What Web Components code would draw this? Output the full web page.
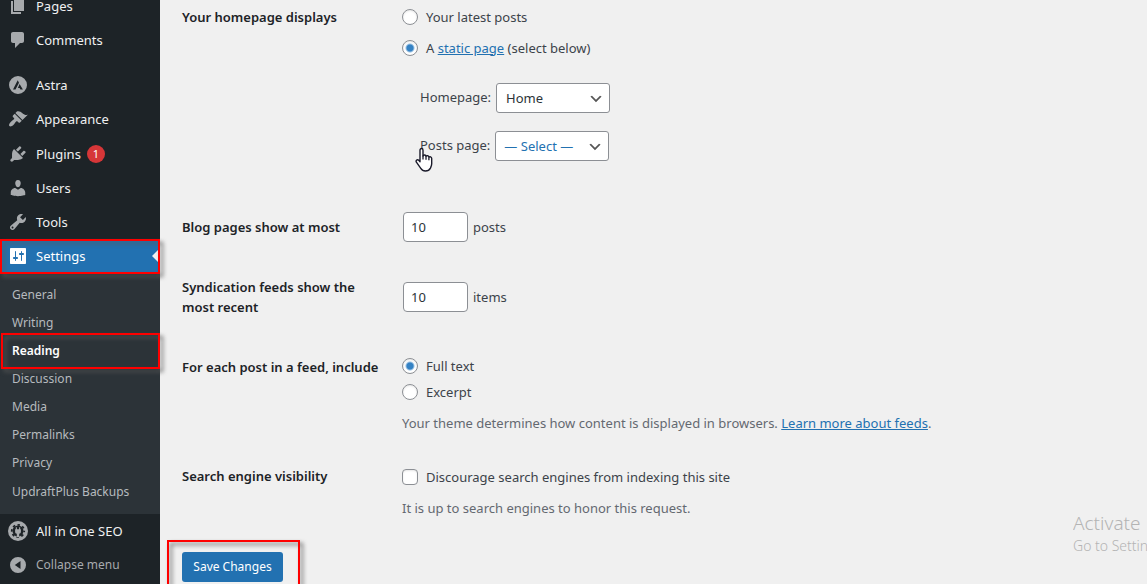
<!DOCTYPE html>
<html lang="en">
<head>
<meta charset="utf-8">
<title>Reading Settings</title>
<style>
  html, body { margin: 0; height: 100%; }
  body {
    overflow: hidden;
    background: #f0f0f0;
    color: #3c434a;
    font: 13px/20px "Noto Sans", "Open Sans", sans-serif;
  }
</style>
</head>
<body>
<admin-shell></admin-shell>

<script>
const icons = {
  page: '<path d="M6 15V2h10v13H6zM5 16h8v2H3V5h2v11z"/>',
  comments: '<path d="M5 2h9c1.100 0 2 .9 2 2v7c0 1.100-.9 2-2 2h-2l-5 5v-5H5c-1.100 0-2-.9-2-2V4c0-1.100.9-2 2-2z"/>',
  astra: '<path fill-rule="evenodd" d="M10 1a9 9 0 1 0 0 18a9 9 0 0 0 0-18zM9.700 5.200l1.300 2.600l-3.500 6.800H5zM11.600 9l3.300 5.600h-2.500l-.8-1.600H9.900z"/>',
  appearance: '<path d="M14.480 11.060L7.410 3.990l1.500-1.500c.5-.56 2.300-.47 3.510.32 1.210.8 1.430 1.280 2.910 2.100 1.180.64 2.450 1.260 4.450.85zm-.71.71L6.700 4.700 4.930 6.470c-.39.39-.39 1.020 0 1.410l1.060 1.060c.39.39.39 1.030 0 1.420-.6.6-1.430 1.110-2.210 1.690-.35.26-.7.53-1.010.84C1.430 14.230.4 16.080 1.400 17.070c.99 1 2.840-.03 4.180-1.360.31-.31.58-.66.85-1.020.57-.78 1.080-1.610 1.690-2.210.39-.39 1.020-.39 1.410 0l1.060 1.060c.39.39 1.020.39 1.410 0z"/>',
  plugins: '<path d="M13.110 4.360L9.870 7.600 8 5.730l3.240-3.240c.35-.34 1.050-.2 1.560.32.52.51.66 1.210.31 1.550zm-8 1.770l.91-1.120 9.010 9.010-1.190.84c-.71.71-2.630 1.160-3.820 1.160H6.140L4.900 17.260c-.59.59-1.540.59-2.120 0-.59-.58-.59-1.530 0-2.120l1.240-1.240v-3.880c0-1.130.4-3.190 1.090-3.890zm7.260 3.970l3.240-3.240c.34-.35 1.040-.21 1.550.31.52.51.66 1.210.31 1.550l-3.240 3.250z"/>',
  users: '<path d="M10 9.250c-2.270 0-2.730-3.440-2.730-3.440C7 4.020 7.820 2 9.970 2c2.160 0 2.980 2.020 2.710 3.810 0 0-.41 3.440-2.680 3.440zm0 2.570L12.720 10c2.390 0 4.520 2.330 4.520 4.530v2.490s-3.650 1.130-7.240 1.130c-3.650 0-7.240-1.130-7.240-1.130v-2.490c0-2.250 1.940-4.480 4.470-4.480z"/>',
  tools: '<path d="M16.680 9.770c-1.340 1.340-3.300 1.670-4.950.99l-5.410 6.520c-.99.99-2.590.99-3.580 0s-.99-2.590 0-3.570l6.520-5.420c-.68-1.650-.35-3.610.99-4.950 1.280-1.280 3.120-1.620 4.720-1.060l-2.890 2.890 2.820 2.820 2.860-2.870c.53 1.580.18 3.390-1.080 4.650zM3.810 16.210c.4.39 1.040.39 1.430 0 .4-.4.4-1.040 0-1.430-.39-.4-1.030-.4-1.430 0-.39.39-.39 1.030 0 1.430z"/>',
  settings: '<path d="M18 17V3c0-.6-.4-1-1-1H3c-.6 0-1 .4-1 1v14c0 .6.4 1 1 1h14c.6 0 1-.4 1-1zM8 11h1c.55 0 1 .45 1 1s-.45 1-1 1H8v1.500c0 .28-.22.5-.5.5s-.5-.22-.5-.5V13H6c-.55 0-1-.45-1-1s.45-1 1-1h1V5.500c0-.28.22-.5.5-.5s.5.22.5.5V11zm5-2h-1c-.55 0-1-.45-1-1s.45-1 1-1h1V5.500c0-.28.22-.5.5-.5s.5.22.5.5V7h1c.55 0 1 .45 1 1s-.45 1-1 1h-1v5.500c0 .28-.22.5-.5.5s-.5-.22-.5-.5V9z"/>',
  seo: '<circle cx="10" cy="10" r="10"/><circle cx="10" cy="10" r="5.500" fill="#1d2327"/><circle cx="10" cy="10" r="6.200" fill="none" stroke="#1d2327" stroke-width="1.800" stroke-dasharray="2.435 2.435" stroke-dashoffset="1.217"/><path d="M7.800 6.300h1.100v2h2.200v-2h1.100v2h.7v2.400c0 1.200-.7 1.800-1.700 2v3.500H8.800v-3.500c-1-.2-1.700-.8-1.700-2V8.300h.7z"/>',
  collapse: '<path fill-rule="evenodd" d="M10 2a8 8 0 1 0 0 16a8 8 0 0 0 0-16zM12.500 6v8L6.800 10z"/>'
};

function define(name, html, setup) {
  customElements.define(name, class extends HTMLElement {
    constructor() {
      super();
      const t = document.createElement('template');
      t.innerHTML = html;
      this.attachShadow({ mode: 'open' }).append(t.content.cloneNode(true));
    }
    connectedCallback() { if (setup) setup(this, this.shadowRoot); }
  });
}

define('menu-item', `
  <style>
    :host { display: block; position: relative; color: #f0f0f1; --icon: #a7aaad; }
    a {
      display: grid; grid-template-columns: 36px auto 1fr; align-items: center;
      min-height: 34px; color: inherit; text-decoration: none;
    }
    svg { width: 20px; height: 20px; justify-self: center; fill: currentColor; color: var(--icon); }
    :host([tall]) a { min-height: 35px; }
    :host([muted]) { color: #a7aaad; font-size: 12px; }
    :host([current]) { background: #2271b1; color: #fff; --icon: #fff; }
    :host([current])::after {
      content: ""; position: absolute; right: 0; top: 9px;
      border: 8px solid transparent; border-right-color: #f0f0f0; border-left: 0;
    }
    ::slotted(b) {
      justify-self: start; margin-left: 6px; width: 18px; height: 18px; border-radius: 9px;
      background: #d63638; color: #fff; font-size: 11px; font-weight: 400; line-height: 18px; text-align: center;
    }
  </style>
  <a href="#"><svg viewBox="0 0 20 20" aria-hidden="true"></svg><span><slot></slot></span><slot name="count"></slot></a>
`, (el, root) => { root.querySelector('svg').innerHTML = icons[el.getAttribute('icon')]; });

define('submenu-item', `
  <style>
    :host { display: block; position: relative; color: #b6babe; font-size: 12px; }
    a { display: block; padding: 0 12px; line-height: 28px; color: inherit; text-decoration: none; }
    :host([current]) { color: #fff; font-weight: 600; }
  </style>
  <a href="#"><slot></slot></a>
`);

define('call-out', `
  <style>
    :host {
      position: absolute; z-index: 2; box-sizing: border-box; pointer-events: none;
      border: 2px solid #f00; filter: drop-shadow(3px 3px 2px rgba(90, 90, 90, .9));
    }
  </style>
`);

define('admin-menu', `
  <style>
    :host { display: block; background: #1d2327; }
    nav { margin-top: -11px; }
    .group { margin-top: 11px; }
    .wrap { position: relative; z-index: 1; }
    .sub { background: #2c3338; padding: 8px 0; }
    .sub submenu-item:last-child { margin-top: 1px; }
    .wrap call-out { inset: 0 0 -1px; }
    .wrap.reading call-out { inset: -4px 0 -4px 1px; }
  </style>
  <nav aria-label="Main menu">
    <menu-item icon="page">Pages</menu-item>
    <menu-item icon="comments">Comments</menu-item>
    <div class="group">
      <menu-item icon="astra">Astra</menu-item>
      <menu-item icon="appearance">Appearance</menu-item>
      <menu-item icon="plugins" tall>Plugins<b slot="count">1</b></menu-item>
      <menu-item icon="users">Users</menu-item>
      <menu-item icon="tools">Tools</menu-item>
      <div class="wrap"><menu-item icon="settings" current>Settings</menu-item><call-out></call-out></div>
      <div class="sub">
        <submenu-item>General</submenu-item>
        <submenu-item>Writing</submenu-item>
        <div class="wrap reading"><submenu-item current>Reading</submenu-item><call-out></call-out></div>
        <submenu-item>Discussion</submenu-item>
        <submenu-item>Media</submenu-item>
        <submenu-item>Permalinks</submenu-item>
        <submenu-item>Privacy</submenu-item>
        <submenu-item>UpdraftPlus Backups</submenu-item>
      </div>
      <menu-item icon="seo">All in One SEO</menu-item>
      <menu-item icon="collapse" muted>Collapse menu</menu-item>
    </div>
  </nav>
`);

define('form-row', `
  <style>
    :host { display: grid; grid-template-columns: 200px 1fr; column-gap: 20px; }
    .heading { padding: 20px 0; color: #1d2327; font-weight: 600; }
    .field { align-self: center; padding: var(--field-padding, 15px 0); }
  </style>
  <div class="heading"><slot name="heading"></slot></div>
  <div class="field"><slot></slot></div>
`);

define('hand-cursor', `
  <style>
    :host { position: absolute; left: -5px; top: 16px; width: 20px; height: 26px; pointer-events: none; }
    svg { display: block; }
  </style>
  <svg width="20" height="26" viewBox="0 0 20 26" aria-hidden="true">
    <path d="M5 3.200C5 .9 8 .9 8 3.200V9c.4-1.500 2.900-1.400 3 .4c.6-1.200 2.800-.9 2.900.8c.9-1 2.800-.5 2.800 1.300v5.200c0 2-.8 3.200-1.300 4.400c-.9 1.800-2 2.900-5 2.900c-2.400 0-3.600-1-4.600-2.700L1.400 15.200c-1-1.800 1-3.200 2.300-1.900L5 14.700z" fill="#fff" stroke="#1a1a2a" stroke-width="1.400" stroke-linejoin="round"/>
    <path d="M8 8.500v4M11 9.500v3.300M13.900 10.500v2.700" fill="none" stroke="#1a1a2a" stroke-width="1.300"/>
  </svg>
`);

define('reading-settings', `
  <style>
    :host { display: block; padding: 0 20px 0 22px; }
    form { margin-top: -13px; }
    a { color: #2271b1; }
    fieldset { border: 0; margin: 0; padding: 0; min-width: 0; }
    .choice { display: flex; align-items: center; gap: 8px; min-height: 26px; }
    .front .choice { min-height: 31px; }
    .pages { display: grid; gap: 18px; margin: 20px 0 0 18px; justify-items: start; }
    .pick { position: relative; display: flex; gap: 5px; line-height: 28px; }
    input, select, button { font: inherit; margin: 0; box-sizing: border-box; }
    input, select { border: 1px solid #8c8f94; background: #fff; color: #2c3338; }
    input[type=radio], input[type=checkbox] { appearance: none; width: 16px; height: 16px; box-shadow: inset 0 1px 2px rgba(0,0,0,.1); }
    input[type=radio] { border-radius: 50%; }
    input[type=checkbox] { border-radius: 4px; }
    input[type=radio]:checked { background: radial-gradient(circle, #3582c4 0 3px, #fff 5px); }
    input[type=number] { width: 65px; height: 30px; padding: 0 7px; border-radius: 4px; margin-left: 1px; appearance: textfield; }
    .number { display: flex; align-items: center; gap: 5px; }
    select {
      appearance: none; width: 114px; height: 30px; padding: 0 24px 0 9px; border-radius: 3px; line-height: 28px;
      background: #fff url('data:image/svg+xml,%3Csvg xmlns="http://www.w3.org/2000/svg" viewBox="0 0 20 20"%3E%3Cpath d="M5 6l5 5 5-5 2 1-7 7-7-7 2-1z" fill="%23555"/%3E%3C/svg%3E') no-repeat right 5px top 55% / 16px 16px;
    }
    select.empty { color: #2271b1; padding-left: 8px; }
    p { margin: 8px 0 0; color: #646970; }
    .front { --field-padding: 14px 0 36px; }
    .include { --field-padding: 16px 0 13px; }
    .search { --field-padding: 18px 0 15px; }
    .submit { position: relative; display: inline-block; margin: 19px 0 0; }
    .submit call-out { inset: -12px -17px -12px -15px; }
    button { width: 101px; height: 30px; padding: 0; border: 0; border-radius: 3px; background: #2271b1; color: #fff; font-size: 12px; }
  </style>
  <form>
    <form-row class="front">
      <span slot="heading">Your homepage displays</span>
      <fieldset aria-label="Your homepage displays">
        <div class="choice"><input type="radio" name="front" id="latest"><label for="latest">Your latest posts</label></div>
        <div class="choice"><input type="radio" name="front" id="static" checked><label for="static">A <a href="#">static page</a> (select below)</label></div>
        <div class="pages">
          <div class="pick"><label for="home">Homepage:</label><select id="home"><option>Home</option></select></div>
          <div class="pick"><label for="posts">Posts page:</label><select id="posts" class="empty"><option>— Select —</option></select><hand-cursor></hand-cursor></div>
        </div>
      </fieldset>
    </form-row>
    <form-row class="blog">
      <label slot="heading" for="per-page">Blog pages show at most</label>
      <div class="number"><input type="number" id="per-page" value="10"><span>posts</span></div>
    </form-row>
    <form-row>
      <label slot="heading" for="per-feed">Syndication feeds show the most recent</label>
      <div class="number"><input type="number" id="per-feed" value="10"><span>items</span></div>
    </form-row>
    <form-row class="include">
      <span slot="heading">For each post in a feed, include</span>
      <fieldset aria-label="For each post in a feed, include">
        <div class="choice"><input type="radio" name="feed" id="full" checked><label for="full">Full text</label></div>
        <div class="choice"><input type="radio" name="feed" id="excerpt"><label for="excerpt">Excerpt</label></div>
        <p>Your theme determines how content is displayed in browsers. <a href="#">Learn more about feeds</a>.</p>
      </fieldset>
    </form-row>
    <form-row class="search">
      <span slot="heading">Search engine visibility</span>
      <div class="choice"><input type="checkbox" id="discourage"><label for="discourage">Discourage search engines from indexing this site</label></div>
      <p>It is up to search engines to honor this request.</p>
    </form-row>
    <div class="submit"><button type="button">Save Changes</button><call-out></call-out></div>
  </form>
`);

define('system-notice', `
  <style>
    :host { position: absolute; right: 0; bottom: 28px; width: 74px; overflow: hidden; white-space: nowrap; color: #b4b4b4; font-size: 14px; font-weight: 300; line-height: 20px; pointer-events: none; }
    strong { display: block; font-size: 19px; font-weight: 300; line-height: 26px; }
  </style>
  <strong>Activate</strong><span>Go to Settings</span>
`);

define('admin-shell', `
  <style>
    :host { position: relative; display: grid; grid-template-columns: 160px 1fr; height: 100vh; overflow: hidden; }
    admin-menu { z-index: 1; }
    main { min-width: 0; }
  </style>
  <admin-menu></admin-menu>
  <main><reading-settings></reading-settings></main>
  <system-notice></system-notice>
`);
</script>
</body>
</html>
